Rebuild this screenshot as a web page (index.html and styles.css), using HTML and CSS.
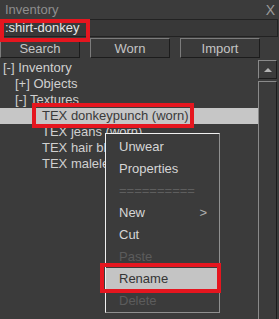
FILE: index.html
```html
<!DOCTYPE html>
<html>
  <head>
    <title>Inventory</title>
    <link rel="stylesheet" href="styles.css">
  </head>
  <body>
    <div class="panel">
      <div class="titlebar">
        <span class="title">Inventory</span>
        <span class="close">X</span>
      </div>

      <div class="search-field">:shirt-donkey</div>

      <div class="button-row">
        <button class="btn">Search</button>
        <button class="btn">Worn</button>
        <button class="btn">Import</button>
      </div>

      <div class="tree-area">
        <div class="tree">
          <div class="row lvl0">[-] Inventory</div>
          <div class="row lvl1">[+] Objects</div>
          <div class="row lvl1">[-] Textures</div>
          <div class="row lvl2 selected">TEX donkeypunch (worn)</div>
          <div class="row lvl2">TEX jeans (worn)</div>
          <div class="row lvl2">TEX hair blonde</div>
          <div class="row lvl2">TEX maleleg</div>
        </div>
        <div class="scrollbar">
          <div class="scroll-up"><span class="arrow"></span></div>
          <div class="scroll-track"></div>
        </div>
      </div>
    </div>

    <!-- right-click menu -->
    <div class="context-menu">
      <div class="item">Unwear</div>
      <div class="item">Properties</div>
      <div class="item separator">==========</div>
      <div class="item">New <span class="sub">&gt;</span></div>
      <div class="item">Cut</div>
      <div class="item disabled">Paste</div>
      <div class="item hover">Rename</div>
      <div class="item disabled">Delete</div>
    </div>

    <!-- red annotation boxes -->
    <div class="mark mark-search"></div>
    <div class="mark mark-item"></div>
    <div class="mark mark-rename"></div>
  </body>
</html>
```

FILE: styles.css
```css
body {
  margin: 0;
  width: 279px;
  height: 319px;
  overflow: hidden;
  background-color: #3b3b3b;
  font-family: "Liberation Sans", Arial, sans-serif;
  font-size: 13px;
  color: #d2d2d2;
  position: relative;
}

.panel {
  display: flex;
  flex-direction: column;
  height: 319px;
}

.titlebar {
  height: 19px;
  display: flex;
  justify-content: space-between;
  align-items: center;
  padding: 0 4px 0 5px;
  color: #8e8e8e;
}

.close {
  color: #9a9a9a;
  font-size: 14px;
}

.search-field {
  height: 16px;
  line-height: 16px;
  margin-right: 1px;
  padding-left: 4px;
  border: 1px solid #222;
  background-color: #383838;
  color: #e6e6e6;
}

.button-row {
  display: flex;
  gap: 10px;
  margin-top: 1px;
  height: 20px;
}

.btn {
  width: 80px;
  height: 20px;
  padding: 0;
  background-color: #3a3a3a;
  color: #c4c4c4;
  font-family: inherit;
  font-size: 13px;
  border-top: 1px solid #7c7c7c;
  border-left: 1px solid #7c7c7c;
  border-right: 1px solid #1c1c1c;
  border-bottom: 1px solid #1c1c1c;
}

/* Tree */
.tree-area {
  flex: 1;
  display: flex;
  padding-top: 2px;
}

.tree {
  flex: 1;
}

.row {
  height: 16px;
  line-height: 16px;
  white-space: nowrap;
  color: #d0d0d0;
}

.lvl0 { padding-left: 3px; }
.lvl1 { padding-left: 15px; }
.lvl2 { padding-left: 42px; }

.row.selected {
  background-color: #c6c6c6;
  color: #3a3a3a;
}

.scrollbar {
  width: 19px;
  margin-right: 2px;
  display: flex;
  flex-direction: column;
  gap: 2px;
}

.scroll-up {
  height: 17px;
  border-top: 1px solid #8a8a8a;
  border-left: 1px solid #8a8a8a;
  border-right: 1px solid #1c1c1c;
  border-bottom: 1px solid #1c1c1c;
  display: flex;
  align-items: center;
  justify-content: center;
}

.arrow {
  width: 0;
  height: 0;
  border-left: 4px solid transparent;
  border-right: 4px solid transparent;
  border-bottom: 4px solid #b4b4b4;
}

.scroll-track {
  flex: 1;
  border-left: 1px solid #8a8a8a;
  border-top: 1px solid #8a8a8a;
  border-right: 1px solid #1c1c1c;
}

/* Context menu */
.context-menu {
  position: absolute;
  left: 105px;
  top: 133px;
  width: 113px;
  height: 176px;
  padding-top: 2px;
  background-color: #3b3b3b;
  border-top: 1px solid #f0f0f0;
  border-left: 1px solid #f0f0f0;
  border-right: 1px solid #909090;
  border-bottom: 1px solid #909090;
}

.item {
  height: 22px;
  line-height: 22px;
  padding-left: 13px;
  padding-right: 12px;
  display: flex;
  justify-content: space-between;
  color: #d6d6d6;
}

.item.separator {
  color: #5e5e5e;
}

.item.disabled {
  color: #5c5c5c;
}

.item.hover {
  background-color: #c4c4c4;
  color: #353535;
  margin-right: 2px;
}

.sub {
  color: #b0b0b0;
}

/* Annotations */
.mark {
  position: absolute;
  border: 4px solid #e5161f;
}

.mark-search {
  left: 0;
  top: 19px;
  width: 82px;
  height: 15px;
}

.mark-item {
  left: 32px;
  top: 103px;
  width: 154px;
  height: 17px;
}

.mark-rename {
  left: 100px;
  top: 263px;
  width: 113px;
  height: 22px;
}
```
